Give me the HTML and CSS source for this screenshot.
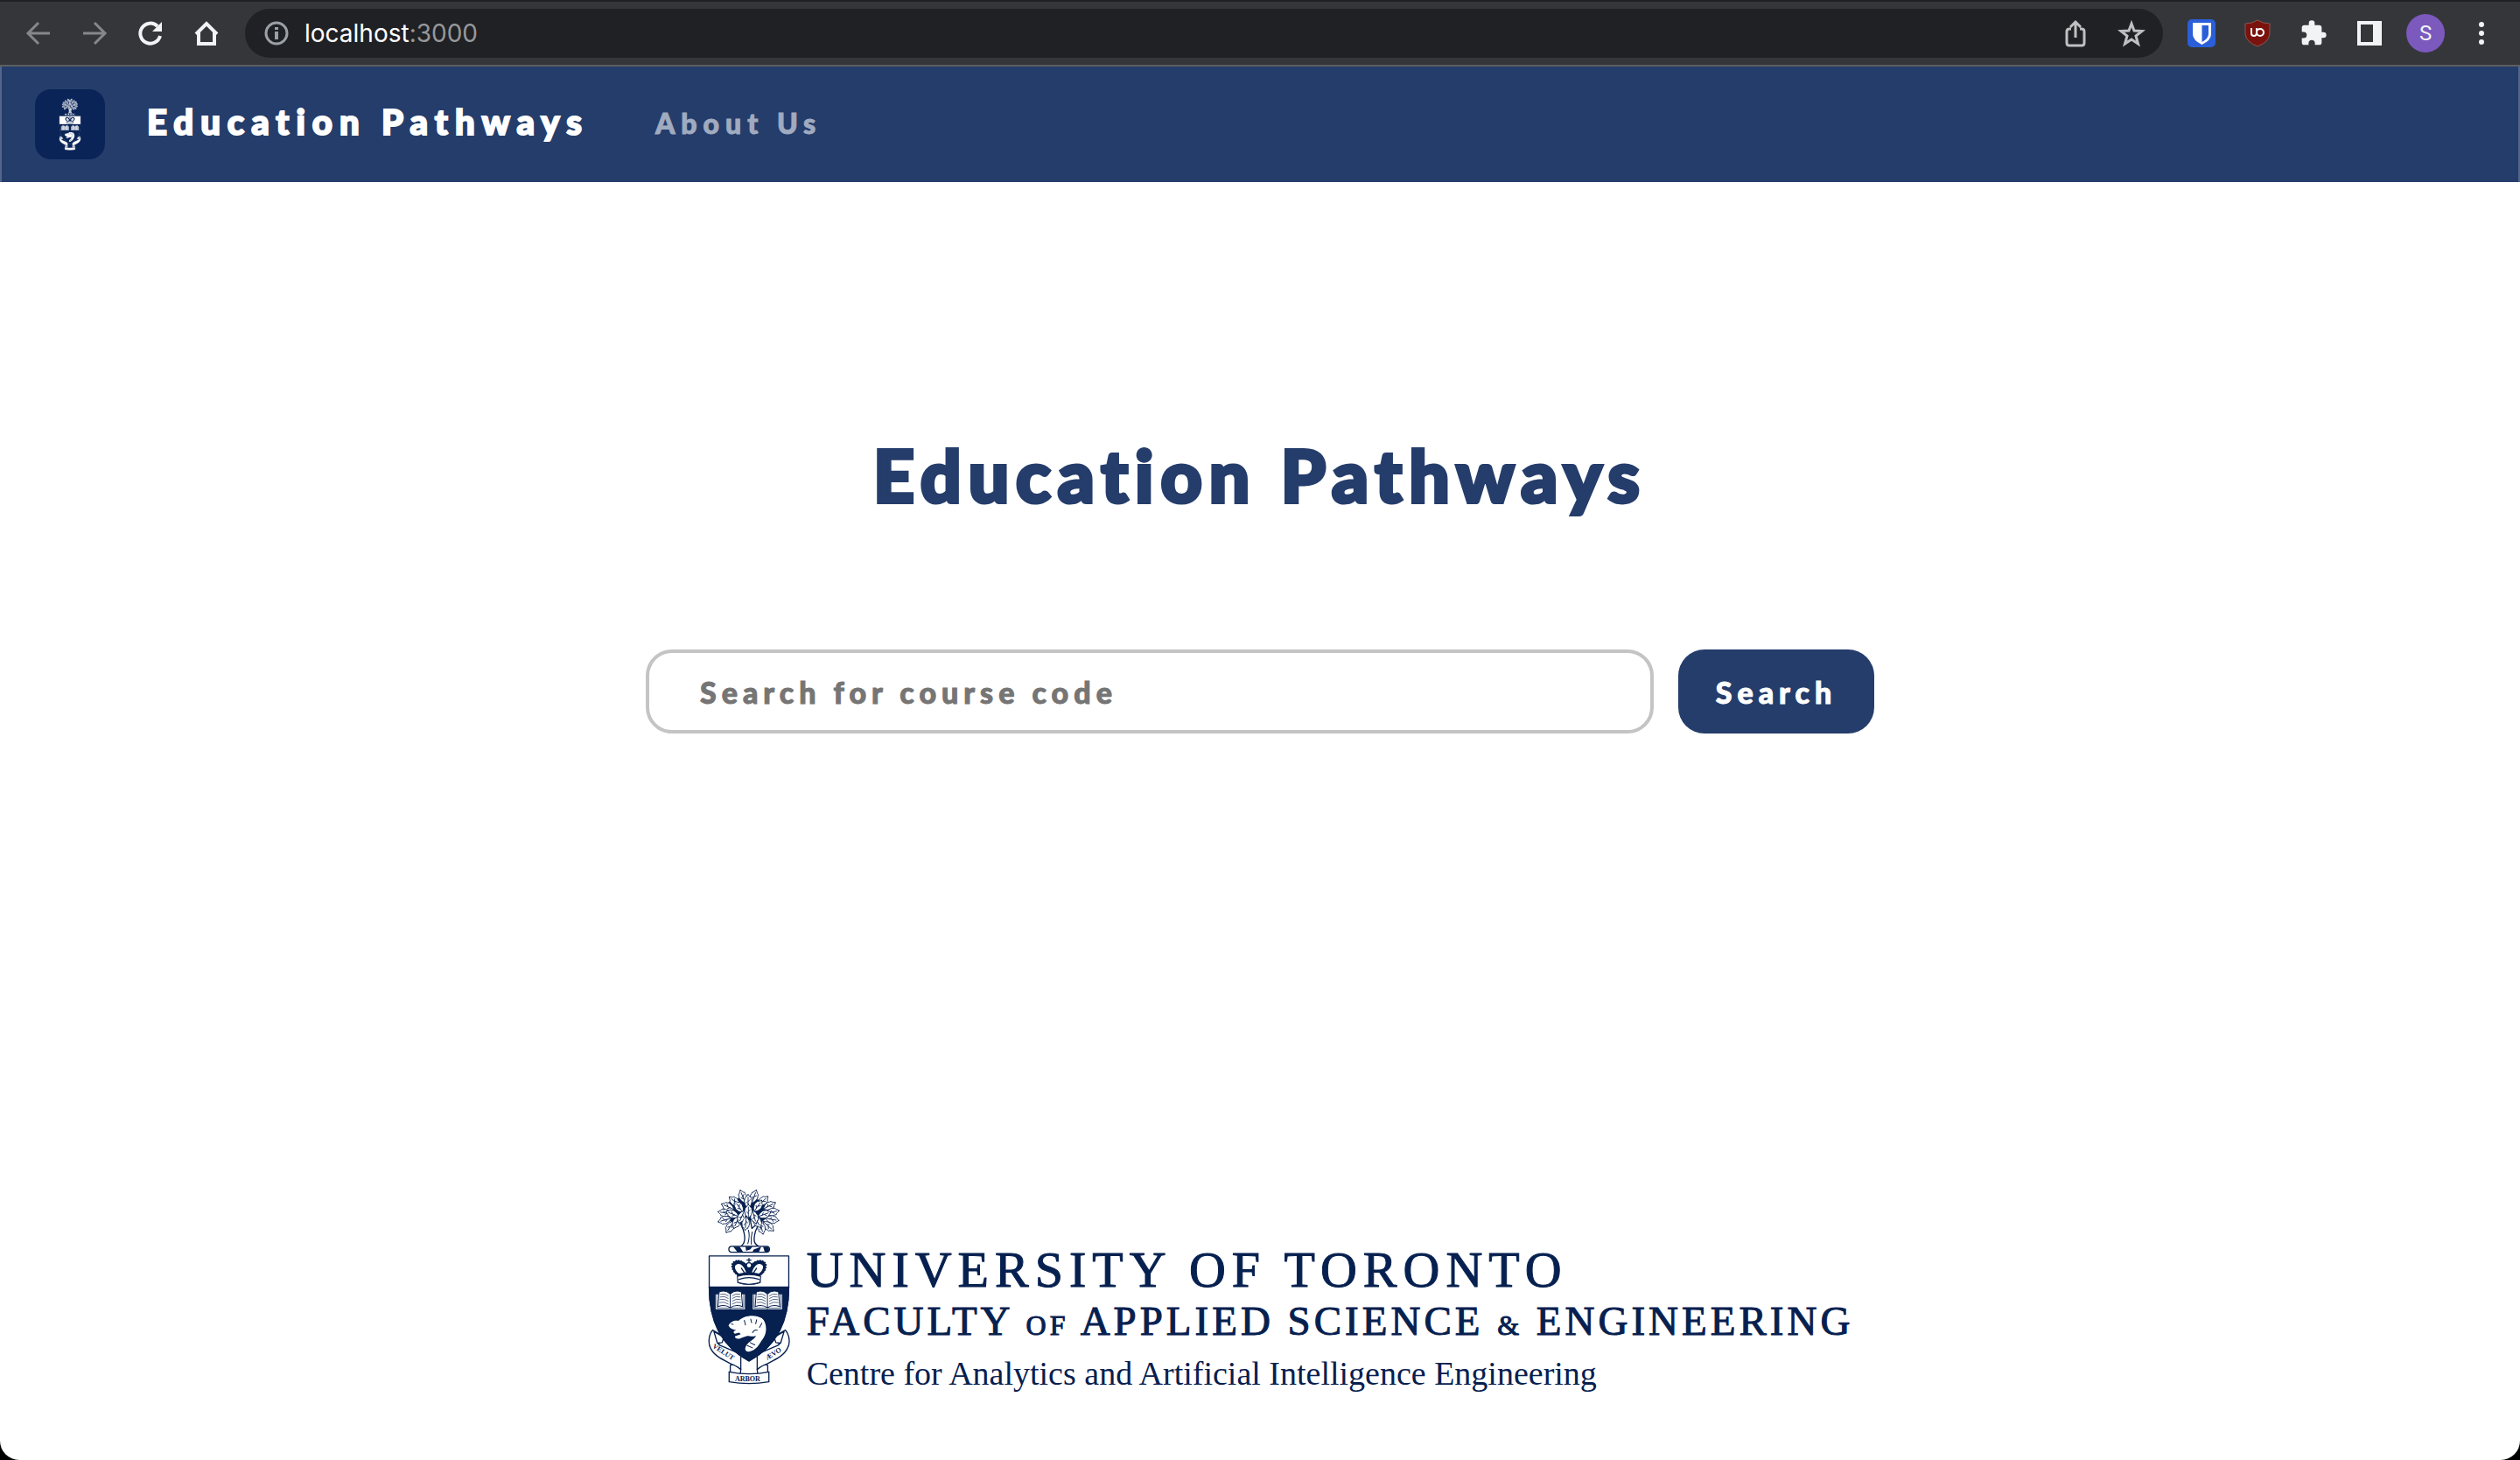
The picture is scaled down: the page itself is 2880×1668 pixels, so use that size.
FILE: index.html
```html
<!DOCTYPE html>
<html lang="en">
<head>
<meta charset="utf-8">
<meta name="viewport" content="width=device-width, initial-scale=1">
<title>Education Pathways</title>
<link rel="stylesheet" href="styles.css">
</head>
<body>
<svg class="sprite" aria-hidden="true">
  <defs>
    <path id="leaf" transform="scale(1.25)" d="M0-19C5-16 4-11 9-10C8-4 13-1 9 4C9 10 4 13 0 19C-4 13-9 10-9 4C-13-1-8-4-9-10C-4-11-5-16 0-19ZM0-12V18M0 0L5-5M0 6L-5 1"/>
    <g id="book">
      <path fill="var(--paper)" stroke="none" d="M-50-22H50V29H-50Z"/>
      <path fill="none" stroke="var(--ink)" stroke-width="2" d="M-46-22V25H-5L0 28L5 25H46V-22"/>
      <path fill="var(--paper)" stroke="var(--ink)" stroke-width="3" d="M0-23C-12-35-28-34-38-30L-42 20C-28 15-12 15 0 24C12 15 28 15 42 20L38-30C28-34 12-35 0-23ZV24"/>
      <path fill="none" stroke="var(--ink)" stroke-width="2" d="M-33-22Q-18-27-7-17M-34-13Q-19-18-7-8M-35-4Q-20-9-7 1M-36 6Q-21 1-7 11M33-22Q18-27 7-17M34-13Q19-18 7-8M35-4Q20-9 7 1M36 6Q21 1 7 11"/>
    </g>
    <symbol id="crest" viewBox="78 54 284 670">
      <g stroke="var(--ink)" stroke-width="4" stroke-linejoin="round" stroke-linecap="round" fill="var(--paper)">
        <path d="M190 252C206 244 210 226 200 194L188 166L214 190L222 150L230 190L258 164L242 200C234 230 236 244 256 252Z"/>
        <path fill="none" stroke-width="3" d="M216 242Q224 215 218 196M228 244Q226 220 231 202"/>
        <path fill="var(--ink)" stroke="none" d="M150 100L200 80L270 95L296 140L262 170L222 160L170 178L140 150Z"/>
        <g stroke-width="2">
          <use href="#leaf" transform="translate(199 82) rotate(-22)"/>
          <use href="#leaf" transform="translate(237 82) rotate(20)"/>
          <use href="#leaf" transform="translate(171 98) rotate(-50)"/>
          <use href="#leaf" transform="translate(267 97) rotate(48)"/>
          <use href="#leaf" transform="translate(148 116) rotate(-66)"/>
          <use href="#leaf" transform="translate(289 113) rotate(62)"/>
          <use href="#leaf" transform="translate(299 134) rotate(78)"/>
          <use href="#leaf" transform="translate(138 137) rotate(-80)"/>
          <use href="#leaf" transform="translate(138 161) rotate(-106)"/>
          <use href="#leaf" transform="translate(298 159) rotate(100)"/>
          <use href="#leaf" transform="translate(156 184) rotate(-145)"/>
          <use href="#leaf" transform="translate(286 182) rotate(132)"/>
          <use href="#leaf" transform="translate(262 186) rotate(165)"/>
          <use href="#leaf" transform="translate(178 168) rotate(-155)"/>
          <use href="#leaf" transform="translate(248 166) rotate(150)"/>
          <use href="#leaf" transform="translate(217 98)"/>
          <use href="#leaf" transform="translate(186 117) rotate(-35)"/>
          <use href="#leaf" transform="translate(250 114) rotate(35)"/>
          <use href="#leaf" transform="translate(164 141) rotate(-68)"/>
          <use href="#leaf" transform="translate(272 142) rotate(70)"/>
          <use href="#leaf" transform="translate(195 150) rotate(-155)"/>
          <use href="#leaf" transform="translate(238 150) rotate(165)"/>
          <use href="#leaf" transform="translate(218 132)"/>
          <use href="#leaf" transform="translate(209 172) rotate(185)"/>
        </g>
        <rect x="151" y="251" width="139" height="20" rx="10"/>
        <path fill="var(--ink)" stroke="none" d="M166 252H188L200 270H180ZM208 252H232L224 262L210 266ZM236 262L262 252L254 270H232ZM268 252H284Q294 262 284 271H274Z"/>
        <path d="M96 537C82 552 80 582 88 598C104 634 150 644 192 672V620L122 590C106 580 112 556 128 556Z"/>
        <path d="M344 537C358 552 362 582 352 598C336 634 290 644 248 672V620L318 590C334 580 328 556 312 556Z"/>
        <path d="M100 542L134 562L128 580L112 582ZM340 542L306 562L312 580L328 582ZM156 658Q164 650 192 672L190 690L156 682ZM284 658Q276 650 248 672L250 690L284 682Z"/>
        <path d="M152 680Q220 694 288 680V714Q220 726 152 714Z"/>
        <path d="M84 284H356V390C356 504 318 590 220 643C122 590 84 504 84 390Z"/>
        <path fill="var(--ink)" d="M84 390H356C356 504 318 590 220 643C122 590 84 504 84 390Z"/>
        <path fill="var(--ink)" stroke="none" d="M180 350C160 338 158 312 168 304C184 292 204 304 220 318C236 304 256 292 272 304C282 312 280 338 260 350V376Q220 390 180 376Z"/>
        <path stroke="none" d="M186 344C172 334 168 318 176 314C190 304 204 320 210 340ZM254 344C268 334 272 318 264 314C250 304 236 320 230 340Z"/>
        <path fill="none" stroke-width="5" stroke-dasharray="1 8" d="M182 350C160 334 154 310 172 302C188 294 208 306 219 330C230 306 252 294 268 302C286 310 280 334 258 350"/>
        <path stroke-width="3" d="M180 354Q220 342 260 354L257 375Q220 386 183 375Z"/>
        <path fill="none" stroke-width="4" d="M186 364Q220 352 254 364M220 292V304M213 298H227M194 326L206 344M246 326L234 344"/>
        <circle cx="220" cy="316" r="9"/>
        <use href="#book" x="156" y="437"/>
        <use href="#book" x="283" y="437"/>
        <path stroke="none" d="M150 522C156 508 172 503 184 506C200 487 242 482 264 497C284 514 282 552 264 572C254 586 248 604 220 611C204 612 204 598 214 586C224 574 240 568 244 556C236 562 222 557 214 557L196 563C184 570 170 566 172 559L192 551L186 546L172 550Q164 546 170 540L176 537Q158 536 150 522Z"/>
        <path fill="none" stroke-width="3" d="M204 504L208 520M226 500L229 512M246 502L243 516M264 514L256 528M232 546Q238 534 248 538M160 516L166 518M214 590L232 598M224 580L240 588"/>
      </g>
    </symbol>
  </defs>
</svg>

<div class="window">
  <div class="toolbar">
    <button class="tool dim" aria-label="Back"><svg width="32" height="32" viewBox="0 0 32 32"><path class="line" d="M29 16H4M16 4L4 16L16 28"/></svg></button>
    <button class="tool dim" aria-label="Forward"><svg width="32" height="32" viewBox="0 0 32 32"><path class="line" d="M3 16H28M16 4L28 16L16 28"/></svg></button>
    <button class="tool" aria-label="Reload"><svg width="32" height="32" viewBox="0 0 32 32"><path class="line thick" d="M27 19A11.500 11.500 0 1 1 24 8"/><path class="solid" d="M29 3V14H18Z"/></svg></button>
    <button class="tool" aria-label="Home"><svg width="32" height="32" viewBox="0 0 32 32"><path class="line thick" d="M4 17L16 5L28 17M7 15V28H25V15"/></svg></button>
    <div class="address">
      <svg class="info" width="32" height="32" viewBox="0 0 32 32"><circle class="line" cx="16" cy="16" r="12"/><path class="solid" d="M14 14H18V23H14ZM14 9H18V12H14Z"/></svg>
      <span class="url">localhost<span class="port">:3000</span></span>
      <button class="tool soft" aria-label="Share"><svg width="32" height="36" viewBox="0 0 32 36"><path class="line" d="M11 13H9Q6 13 6 16V29Q6 32 9 32H23Q26 32 26 29V16Q26 13 23 13H21M16 23V5M10 11L16 5L22 11"/></svg></button>
      <button class="tool soft" aria-label="Bookmark"><svg width="32" height="32" viewBox="0 0 32 32"><path class="line" d="M16 5L19 13L28 13.500L21 19L23.500 28L16 23L8.500 28L11 19L4 13.500L13 13Z"/></svg></button>
    </div>
    <button class="tool" aria-label="Bitwarden"><svg width="32" height="32" viewBox="0 0 32 32"><rect width="32" height="32" rx="5" fill="#2b5fd9"/><path fill="#fff" d="M6 4H27V17Q27 24 16.500 29Q6 24 6 17Z"/><path fill="#2b5fd9" d="M16.500 7H24V17Q24 22 16.500 26Z"/></svg></button>
    <button class="tool" aria-label="uBlock Origin"><svg width="32" height="32" viewBox="0 0 32 32"><path fill="#7a130d" stroke="#8c5552" d="M16 1Q22 5 30 5V17Q29 26 16 31Q3 26 2 17V5Q10 5 16 1Z"/><path fill="none" stroke="#fff" stroke-width="2" d="M9 10V16Q9 19 12 19Q15 19 15 15V10"/><circle cx="19" cy="15" r="4" fill="none" stroke="#fff" stroke-width="2"/></svg></button>
    <button class="tool" aria-label="Extensions"><svg width="32" height="32" viewBox="0 0 24 24"><path class="solid" d="M20.500 11H19V7c0-1.100-.9-2-2-2h-4V3.500a2.500 2.500 0 0 0-5 0V5H4c-1.100 0-2 .9-2 2v3.800h1.500a2.700 2.700 0 0 1 0 5.400H2V20c0 1.100.9 2 2 2h3.800v-1.500a2.700 2.700 0 0 1 5.400 0V22H17c1.100 0 2-.9 2-2v-4h1.500a2.500 2.500 0 0 0 0-5z"/></svg></button>
    <button class="tool" aria-label="Side panel"><svg width="28" height="28" viewBox="0 0 28 28"><path class="solid" fill-rule="evenodd" d="M0 0H28V28H0ZM4 4V24H18V4Z"/></svg></button>
    <button class="tool" aria-label="Profile"><span class="avatar">S</span></button>
    <button class="tool" aria-label="Menu"><svg width="32" height="32" viewBox="0 0 32 32"><g class="solid"><circle cx="16" cy="6" r="3"/><circle cx="16" cy="16" r="3"/><circle cx="16" cy="26" r="3"/></g></svg></button>
  </div>

  <nav class="navbar">
    <a class="emblem" href="#" aria-label="Home"><svg class="emblem-crest" aria-hidden="true"><use href="#crest"/></svg></a>
    <a class="brand" href="#">Education Pathways</a>
    <a class="nav-link" href="#about">About Us</a>
  </nav>

  <main>
    <h1>Education Pathways</h1>
    <form class="search">
      <input type="text" placeholder="Search for course code" aria-label="Search for course code">
      <button type="button">Search</button>
    </form>
  </main>

  <footer>
    <svg class="crest" viewBox="78 54 284 670" role="img" aria-label="University of Toronto crest">
      <use href="#crest" x="78" y="54" width="284" height="670"/>
      <g class="motto">
        <text transform="translate(94 596) rotate(33)">VELUT</text>
        <text x="172" y="712">ARBOR</text>
        <text transform="translate(282 640) rotate(-32)">ÆVO</text>
      </g>
    </svg>
    <div class="wordmark">
      <p class="university">UNIVERSITY OF TORONTO</p>
      <p class="faculty">FACULTY <small>OF</small> APPLIED SCIENCE <small>&amp;</small> ENGINEERING</p>
      <p class="centre">Centre for Analytics and Artificial Intelligence Engineering</p>
    </div>
  </footer>
</div>
</body>
</html>
```
FILE: styles.css
```css
* { box-sizing: border-box; }

html { background: #000; }

body {
  margin: 0;
  font-family: Lato, "Open Sans", sans-serif;
  --navy: #253d6b;
  --ink: #06204f;
  --paper: #fff;
}

button, input { font: inherit; margin: 0; }
a { text-decoration: none; }

.sprite { position: absolute; width: 0; height: 0; }

.window {
  display: flex;
  flex-direction: column;
  min-height: 100vh;
  background: #fff;
  border-radius: 0 0 22px 22px;
  overflow: hidden;
}

/* Browser toolbar */
.toolbar {
  display: flex;
  align-items: center;
  height: 76px;
  padding: 0 12px;
  background: #35363a;
  border-top: 2px solid #202124;
  border-bottom: 2px solid #5d5e60;
  color: #f1f3f4;
}

.tool {
  display: flex;
  align-items: center;
  justify-content: center;
  flex: none;
  width: 64px;
  height: 56px;
  padding: 0;
  border: 0;
  background: none;
  color: inherit;
}

.dim { color: #86878a; }
.soft { color: #bfc0c2; }

.line { fill: none; stroke: currentColor; stroke-width: 3; }
.thick { stroke-width: 4; }
.solid { fill: currentColor; }

.address {
  display: flex;
  align-items: center;
  flex: 1;
  height: 56px;
  margin: 0 12px;
  padding: 0 4px 0 20px;
  border-radius: 28px;
  background: #202124;
}

.info { color: #9aa0a6; }

.url {
  flex: 1;
  margin-left: 16px;
  font-family: Inter, sans-serif;
  font-size: 28px;
  color: #fff;
}

.port { color: #96989b; }

.avatar {
  width: 44px;
  height: 44px;
  border-radius: 50%;
  background: #7b59bd;
  font-family: Roboto, sans-serif;
  font-size: 24px;
  line-height: 44px;
}

/* Site navigation */
.navbar {
  display: flex;
  align-items: center;
  height: 132px;
  padding: 0 38px;
  background: var(--navy);
  border: solid #53668b;
  border-width: 0 2px;
}

.emblem {
  display: flex;
  align-items: center;
  justify-content: center;
  width: 80px;
  height: 80px;
  border-radius: 18px;
  background: #0a2458;
  --ink: #0a2458;
}

.emblem-crest { width: 26px; height: 60px; }

.brand {
  margin-left: 48px;
  padding-bottom: 6px;
  font-size: 40px;
  font-weight: 900;
  letter-spacing: 8px;
  color: #fff;
  -webkit-text-stroke: 2px;
}

.nav-link {
  margin-left: 76px;
  padding-bottom: 4px;
  font-size: 32px;
  font-weight: 900;
  letter-spacing: 7px;
  color: #a0abc0;
  -webkit-text-stroke: 1px;
}

/* Search */
main {
  display: flex;
  flex-direction: column;
  align-items: center;
  padding: 284px 40px 0;
}

h1 {
  margin: 0;
  font-size: 82px;
  line-height: 100px;
  font-weight: 900;
  letter-spacing: 8px;
  color: var(--navy);
  -webkit-text-stroke: 4px;
}

.search {
  display: flex;
  gap: 28px;
  width: 100%;
  max-width: 1404px;
  margin-top: 150px;
}

.search input {
  flex: 1;
  min-width: 0;
  height: 96px;
  padding: 0 58px;
  border: 4px solid #c4c4c4;
  border-radius: 30px;
  background: #fff;
  font-size: 34px;
  font-weight: 900;
  letter-spacing: 6px;
  -webkit-text-stroke: 1px;
}

.search input::placeholder { color: #757575; opacity: 1; }

.search button {
  width: 224px;
  height: 96px;
  padding: 0;
  border: 0;
  border-radius: 30px;
  background: var(--navy);
  color: #fff;
  font-size: 34px;
  font-weight: 900;
  letter-spacing: 6px;
  -webkit-text-stroke: 1px;
}

/* University wordmark */
footer {
  display: flex;
  justify-content: center;
  gap: 18px;
  margin-top: auto;
  padding: 0 0 72px 46px;
  color: var(--ink);
}

.crest { flex: none; width: 96px; height: 224px; margin-bottom: 14px; }

.motto {
  font: bold 24px "Liberation Serif", serif;
  fill: var(--ink);
}

.wordmark {
  align-self: flex-end;
  font-family: "Liberation Serif", "Times New Roman", serif;
  white-space: nowrap;
}

.wordmark p { margin: 0; }
.university { font-size: 58px; line-height: 60px; letter-spacing: 7px; -webkit-text-stroke: 1px; }
.faculty { font-size: 47px; line-height: 56px; letter-spacing: 4px; -webkit-text-stroke: 1px; }
.faculty small { font-size: 32px; }
.centre { font-size: 38px; line-height: 54px; }
```
